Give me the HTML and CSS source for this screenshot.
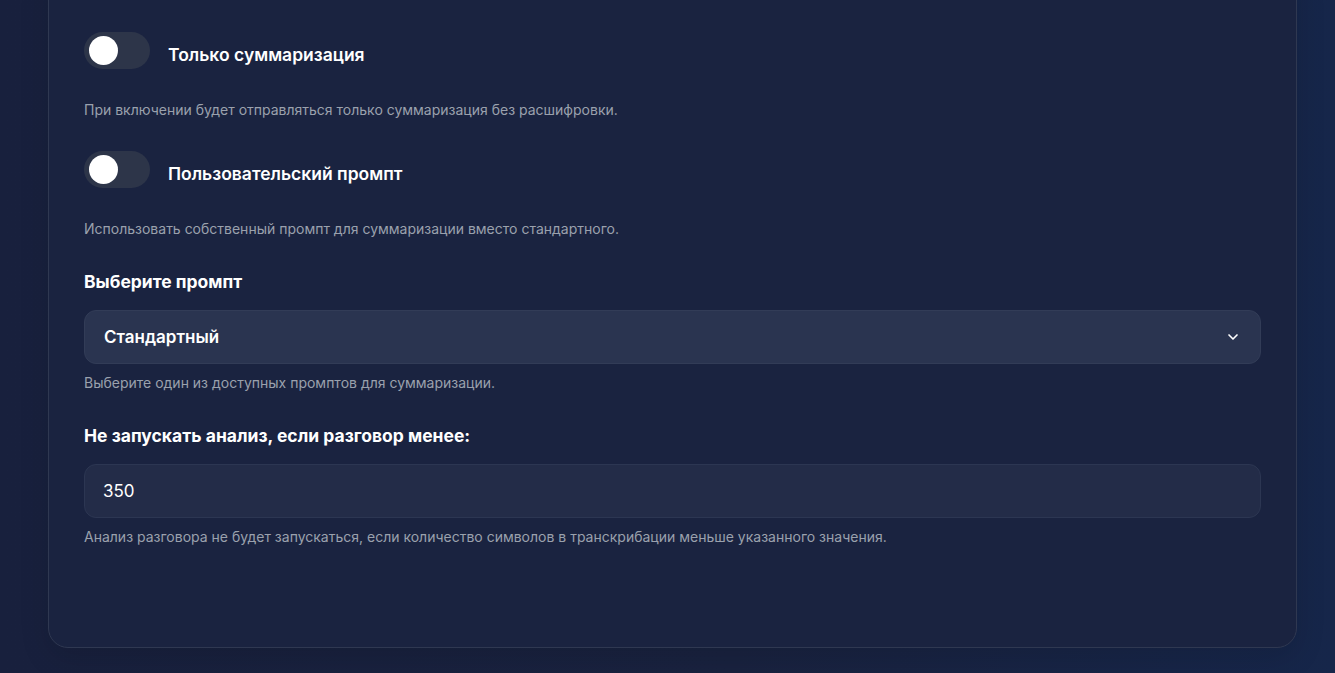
FILE: index.html
```html
<!DOCTYPE html>
<html lang="ru">
<head>
  <meta charset="UTF-8">
  <meta name="viewport" content="width=device-width, initial-scale=1.0">
  <title>Настройки суммаризации</title>
  <link rel="stylesheet" href="styles.css">
</head>
<body>
  <main class="page">
    <section class="card">
      <!-- Summary only -->
      <div class="field">
        <label class="toggle-row">
          <span class="switch"><span class="knob"></span></span>
          <span class="toggle-label">Только суммаризация</span>
        </label>
        <p class="hint hint-toggle">При включении будет отправляться только суммаризация без расшифровки.</p>
      </div>

      <!-- Custom prompt -->
      <div class="field">
        <label class="toggle-row">
          <span class="switch"><span class="knob"></span></span>
          <span class="toggle-label">Пользовательский промпт</span>
        </label>
        <p class="hint hint-toggle">Использовать собственный промпт для суммаризации вместо стандартного.</p>
      </div>

      <!-- Prompt select -->
      <div class="field">
        <label class="field-label" for="prompt">Выберите промпт</label>
        <div class="select">
          <span class="select-value">Стандартный</span>
          <svg class="chevron" width="16" height="16" viewBox="0 0 24 24" fill="none" stroke="currentColor" stroke-width="2.5" stroke-linecap="round" stroke-linejoin="round"><path d="M6 9l6 6 6-6"/></svg>
        </div>
        <p class="hint">Выберите один из доступных промптов для суммаризации.</p>
      </div>

      <!-- Min length -->
      <div class="field">
        <label class="field-label" for="min-length">Не запускать анализ, если разговор менее:</label>
        <input class="input" id="min-length" type="text" value="350">
        <p class="hint">Анализ разговора не будет запускаться, если количество символов в транскрибации меньше указанного значения.</p>
      </div>
    </section>
  </main>
</body>
</html>
```

FILE: styles.css
```css
/* General */
* {
  margin: 0;
  padding: 0;
  box-sizing: border-box;
}

html, body {
  height: 100%;
}

body {
  font-family: Inter, "Noto Sans", sans-serif;
  background: linear-gradient(90deg, #18203d 0%, #19223f 55%, #16264a 100%);
  color: #fff;
  overflow: hidden;
}

.page {
  padding: 0 38px 0 48px;
}

/* Card */
.card {
  margin-top: -40px;
  padding: 71px 35px 100px;
  background-color: #1a2340;
  border: 1px solid #2f3851;
  border-radius: 20px;
  box-shadow: 0 10px 30px rgba(0, 0, 0, 0.12);
  display: flex;
  flex-direction: column;
  gap: 31px;
}

/* Toggles */
.toggle-row {
  display: flex;
  align-items: center;
  gap: 18px;
  height: 37px;
}

.switch {
  width: 66px;
  height: 37px;
  border-radius: 19px;
  background-color: #2d3549;
  padding: 4px 5px;
  display: flex;
  align-items: center;
}

.knob {
  width: 29px;
  height: 29px;
  border-radius: 50%;
  background-color: #fff;
}

.toggle-label {
  font-size: 17.5px;
  font-weight: 600;
  color: #fff;
  margin-top: 7px;
}

/* Labels and hints */
.field-label {
  display: block;
  font-size: 17.5px;
  font-weight: 700;
  line-height: 24px;
  margin-bottom: 16px;
}

.hint {
  font-size: 14px;
  line-height: 20px;
  color: #9aa1ad;
  margin-top: 9px;
}

.hint.hint-toggle {
  margin-top: 31px;
}

/* Select / input */
.select,
.input {
  width: 100%;
  height: 54px;
  border-radius: 12px;
  border: 1px solid #343e58;
  display: flex;
  align-items: center;
  justify-content: space-between;
  padding: 0 19px;
  font-family: inherit;
  font-size: 17px;
  color: #fff;
}

.select {
  background-color: #2a3450;
  border-color: #323c57;
}

.select-value {
  font-weight: 600;
}

.chevron {
  color: #fff;
}

.input {
  background-color: #232c48;
  border-color: #2c3652;
  outline: none;
  padding-left: 18px;
}
```
